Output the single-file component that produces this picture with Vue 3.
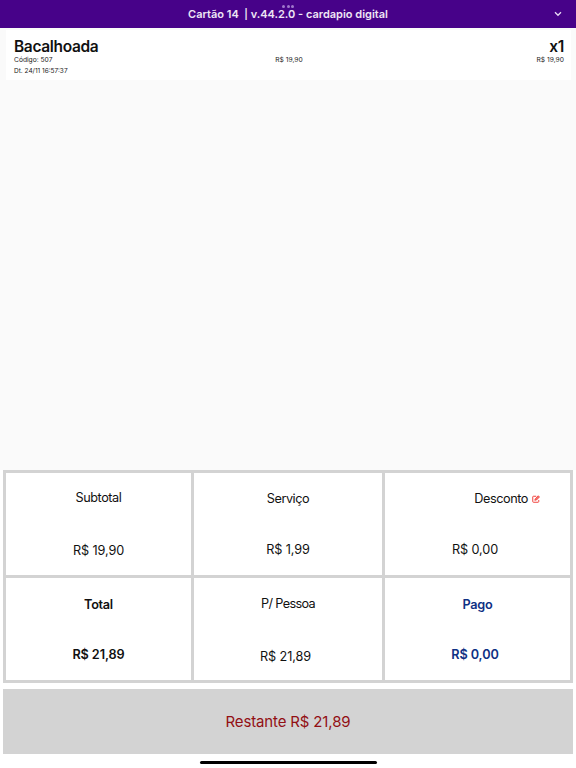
<template>
  <div class="page">
    <header class="topbar">
      <h1 class="title">Cartão 14 &nbsp;<span class="bar">|</span> v.44.2.0 - cardapio digital</h1>
      <div class="dots"><i></i><i></i><i></i></div>
      <svg class="chevron" viewBox="0 0 8 6" fill="none" stroke="#e9dcf5" stroke-width="1.3">
        <path d="M1 1.3 L4 4.3 L7 1.3" />
      </svg>
    </header>

    <main class="orders">
      <article v-for="item in items" :key="item.code" class="item">
        <div class="info">
          <h2 class="name">{{ item.name }}</h2>
          <p>Código: {{ item.code }}</p>
          <p class="date">Dt. {{ item.date }}</p>
        </div>
        <p class="unit">{{ item.price }}</p>
        <div class="amount">
          <h2 class="qty">x{{ item.qty }}</h2>
          <p>{{ item.total }}</p>
        </div>
      </article>
    </main>

    <section class="summary">
      <div v-for="cell in cells" :key="cell.id" class="cell" :class="cell.id">
        <div class="label">
          <span>{{ cell.label }}</span>
          <svg v-if="cell.editable" class="edit" viewBox="0 0 16 16" fill="none" stroke="#f0443f">
            <path d="M8.5 2.5H2.8Q1.5 2.5 1.5 3.8V13.2Q1.5 14.5 2.8 14.5H12.2Q13.5 14.5 13.5 13.2V10" stroke-width="2" />
            <path d="M5.5 10.5L6.5 7.5L12.5 1.5L15 4L9 10Z" stroke-width="1.6" fill="#f5706d" />
          </svg>
        </div>
        <div class="value">{{ cell.value }}</div>
      </div>
    </section>

    <button class="remaining"><span>Restante R$ 21,89</span></button>
    <div class="home-bar"></div>
  </div>
</template>

<script setup>
import { ref } from 'vue'

const items = ref([
  {
    name: 'Bacalhoada',
    code: 507,
    date: '24/11 16:57:37',
    price: 'R$ 19,90',
    qty: 1,
    total: 'R$ 19,90',
  },
])

const cells = ref([
  { id: 'subtotal', label: 'Subtotal', value: 'R$ 19,90' },
  { id: 'servico', label: 'Serviço', value: 'R$ 1,99' },
  { id: 'desconto', label: 'Desconto', value: 'R$ 0,00', editable: true },
  { id: 'total', label: 'Total', value: 'R$ 21,89' },
  { id: 'pessoa', label: 'P/ Pessoa', value: 'R$ 21,89' },
  { id: 'pago', label: 'Pago', value: 'R$ 0,00' },
])
</script>

<style>
body {
  background: #fff;
}
</style>

<style scoped>
.page {
  display: flex;
  flex-direction: column;
  box-sizing: border-box;
  height: 768px;
  overflow: hidden;
  font-family: Inter, "Liberation Sans", sans-serif;
  color: #111;
}

h1,
h2,
p {
  margin: 0;
}

.topbar {
  position: relative;
  display: flex;
  align-items: center;
  justify-content: center;
  flex: none;
  height: 28px;
  background: #470289;
}

.title {
  font-size: 11px;
  font-weight: 600;
  line-height: 28px;
  color: #eee6f5;
  white-space: nowrap;
}

.bar {
  font-size: 10px;
}

/* multitasking dots, laid over the title */
.dots {
  position: absolute;
  top: 5px;
  left: 282px;
  display: flex;
  gap: 1.5px;
}

.dots i {
  width: 3px;
  height: 3px;
  border-radius: 50%;
  background: #a078cc;
}

.chevron {
  position: absolute;
  top: 11px;
  right: 14px;
  width: 8px;
  height: 6px;
}

.orders {
  flex: 1;
  padding: 2px 5px 0 6px;
  background: #fafafa;
}

.item {
  display: grid;
  grid-template-columns: 1fr 1fr 1fr;
  box-sizing: border-box;
  height: 50px;
  padding: 7px 7px 0 8px;
  background: #fff;
  font-size: 6.7px;
  line-height: 11px;
  color: #222;
}

.name,
.qty {
  height: 18px;
  font-size: 15.5px;
  font-weight: 600;
  line-height: 20px;
  letter-spacing: -0.35px;
  color: #111;
}

.date {
  font-size: 6.5px;
}

.unit {
  padding-top: 18px;
  text-align: center;
}

.amount {
  text-align: right;
}

.summary {
  display: grid;
  grid-template-columns: 185px 188px 185px;
  grid-template-rows: 102px 102px;
  gap: 3px;
  flex: none;
  margin: 0 3px;
  padding: 3px;
  background: #d3d3d3;
}

.cell {
  box-sizing: border-box;
  padding-top: 18px;
  background: #fff;
  font-size: 12.7px;
  line-height: 16px;
  letter-spacing: -0.1px;
  text-align: center;
}

.label {
  letter-spacing: -0.45px;
}

.value {
  margin-top: 37px;
}

.subtotal {
  padding-top: 17px;
}

.servico .value,
.desconto .value {
  margin-top: 35px;
}

.desconto .label {
  display: flex;
  align-items: center;
  justify-content: flex-end;
  gap: 4px;
  padding-right: 30px;
}

.edit {
  width: 8px;
  height: 8px;
}

.desconto .value,
.pago .value,
.pessoa .value {
  padding-right: 5px;
}

.pessoa .label {
  letter-spacing: -0.65px;
}

.total,
.pago {
  padding-top: 19px;
  font-weight: 600;
}

.total .label,
.pago .label {
  letter-spacing: -0.3px;
}

.total .value,
.pago .value {
  margin-top: 34px;
}

.pago {
  color: #0f3184;
}

.remaining {
  flex: none;
  height: 65px;
  margin: 6px 3px 0;
  padding: 0;
  border: 0;
  background: #d3d3d3;
  font-family: inherit;
  font-size: 15px;
  letter-spacing: -0.15px;
  color: #920f14;
}

.home-bar {
  flex: none;
  width: 177px;
  height: 3px;
  margin: 6.5px auto 4.5px;
  border-radius: 2px;
  background: #000;
}
</style>
